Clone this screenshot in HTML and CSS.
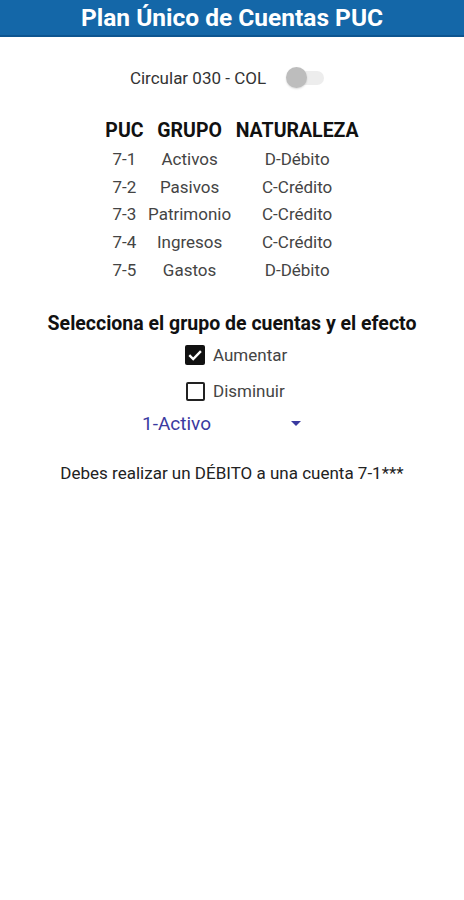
FILE: index.html
```html
<!DOCTYPE html>
<html lang="es">
<head>
<meta charset="utf-8">
<link rel="stylesheet" href="styles.css">
</head>
<body>
<header class="appbar"><h1>Plan Único de Cuentas PUC</h1></header>
<div class="switch-row">
  <span class="switch-label">Circular 030 - COL</span>
  <span class="switch"><span class="track"></span><span class="thumb"></span></span>
</div>
<div class="table">
  <div class="th">PUC</div><div class="th">GRUPO</div><div class="th">NATURALEZA</div>
  <div class="td">7-1</div><div class="td">Activos</div><div class="td">D-Débito</div>
  <div class="td">7-2</div><div class="td">Pasivos</div><div class="td">C-Crédito</div>
  <div class="td">7-3</div><div class="td">Patrimonio</div><div class="td">C-Crédito</div>
  <div class="td">7-4</div><div class="td">Ingresos</div><div class="td">C-Crédito</div>
  <div class="td">7-5</div><div class="td">Gastos</div><div class="td">D-Débito</div>
</div>
<h2 class="section-title">Selecciona el grupo de cuentas y el efecto</h2>
<div class="checks">
  <label class="check"><span class="box"><svg viewBox="0 0 20 20" width="20" height="20"><rect x="0" y="0" width="20" height="20" rx="2" fill="#111"/><path d="M4.3 10.2 L8.2 14 L15.9 6.2" fill="none" stroke="#fff" stroke-width="2.4"/></svg></span><span class="check-text">Aumentar</span></label>
  <label class="check"><span class="box empty"></span><span class="check-text">Disminuir</span></label>
</div>
<div class="dropdown">
  <span class="dd-value">1-Activo</span>
  <svg class="dd-arrow" viewBox="0 0 10 5" width="10" height="5"><path d="M0 0 L10 0 L5 5 Z" fill="#3a3aa0"/></svg>
</div>
<p class="message">Debes realizar un DÉBITO a una cuenta 7-1***</p>
</body>
</html>
```
FILE: styles.css
```css
* { box-sizing: border-box; }
body {
  margin: 0;
  font-family: Roboto, "Noto Sans", sans-serif;
  background: #fff;
  color: #333;
}
.appbar {
  height: 37px;
  background: #1467a8;
  border-bottom: 2px solid #0d5590;
  display: flex;
  align-items: center;
  justify-content: center;
  padding-top: 2px;
}
.appbar h1 {
  margin: 0;
  color: #fff;
  font-size: 24.5px;
  font-weight: 700;
  line-height: 1;
}
.switch-row {
  display: flex;
  align-items: center;
  justify-content: center;
  height: 24px;
  margin-top: 29px;
  gap: 20px;
  padding-right: 10px;
}
.switch-label {
  font-size: 17px;
  color: #333;
}
.switch {
  position: relative;
  width: 38px;
  height: 22px;
  display: inline-block;
}
.track {
  position: absolute;
  left: 4px;
  top: 4px;
  width: 34px;
  height: 14px;
  border-radius: 7px;
  background: #ededed;
}
.thumb {
  position: absolute;
  left: 0;
  top: 0;
  width: 21px;
  height: 21px;
  border-radius: 50%;
  background: #bdbdbd;
  box-shadow: 0 1px 2px rgba(0,0,0,0.15);
}
.table {
  display: grid;
  grid-template-columns: auto auto auto;
  justify-content: center;
  column-gap: 4.5px;
  margin-top: 27px;
}
.th {
  font-weight: 700;
  font-size: 19.5px;
  color: #111;
  text-align: center;
  height: 29px;
  line-height: 28px;
}
.td {
  font-size: 17px;
  color: #444;
  text-align: center;
  height: 27.7px;
  line-height: 27.7px;
}
.section-title {
  margin: 26px 0 0;
  height: 28px;
  line-height: 28px;
  text-align: center;
  font-size: 19.5px;
  font-weight: 700;
  color: #111;
}
.checks {
  display: flex;
  flex-direction: column;
  align-items: flex-start;
  gap: 16px;
  width: 104px;
  margin: 7px 0 0 185px;
}
.check {
  display: flex;
  align-items: center;
  gap: 8px;
  height: 20px;
  font-size: 17px;
  color: #444;
}
.check .box { width: 20px; height: 20px; display: block; }
.check .box svg { display: block; }
.check .box.empty {
  width: 19px;
  height: 19px;
  border: 2px solid #222;
  border-radius: 2px;
  margin-left: 1px;
}
.dropdown {
  display: flex;
  align-items: center;
  justify-content: space-between;
  width: 161px;
  height: 24px;
  margin: 10px 0 0 142px;
}
.dd-value {
  font-size: 19px;
  color: #3a3aa0;
}
.dd-arrow { margin-right: 2px; }
.message {
  margin: 27px 0 0;
  text-align: center;
  font-size: 17px;
  line-height: 22px;
  color: #222;
}
```
